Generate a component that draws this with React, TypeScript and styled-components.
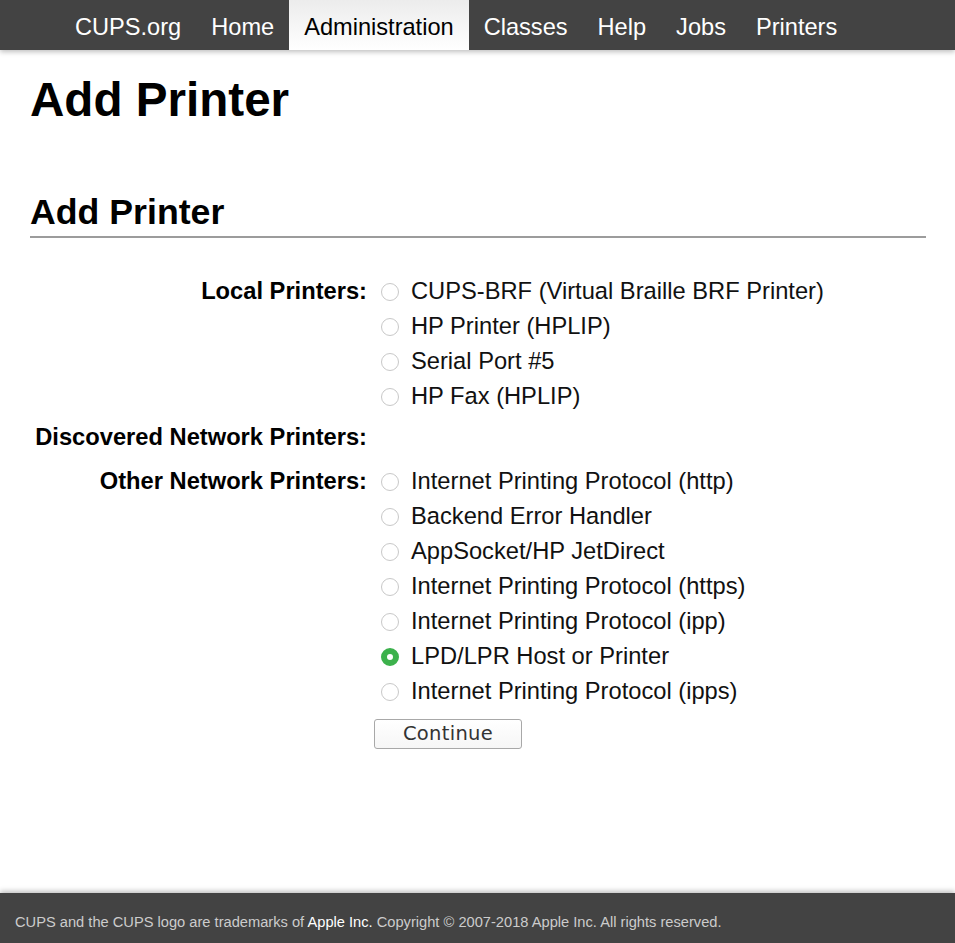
import React from "react";
import styled, { createGlobalStyle } from "styled-components";

const GlobalStyle = createGlobalStyle`
  html, body {
    margin: 0;
    padding: 0;
    background: #fff;
  }
  body {
    font-family: "Liberation Sans", Arial, Helvetica, sans-serif;
    color: #000;
  }
`;

const Page = styled.div`
  display: flex;
  flex-direction: column;
  min-height: 100vh;
`;

const Header = styled.nav`
  position: relative;
  z-index: 2;
  display: flex;
  height: 50px;
  padding-left: 60px;
  background: #434343;
  box-shadow: 0 2px 5px rgba(0, 0, 0, 0.25);
`;

const NavLink = styled.a<{ $active?: boolean }>`
  display: block;
  box-sizing: border-box;
  height: 50px;
  padding: 5px 15px 0;
  font-size: 23.6px;
  line-height: 45px;
  text-decoration: none;
  color: ${(p) => (p.$active ? "#000" : "#fff")};
  background: ${(p) => (p.$active ? "linear-gradient(#ececec, #ffffff)" : "transparent")};
`;

const Main = styled.main`
  flex: 1;
  padding: 0 29px 0 30px;
`;

const Title = styled.h1`
  margin: 26px 0 0;
  font-size: 47.6px;
  line-height: 48px;
  font-weight: bold;
`;

const SectionTitle = styled.h2`
  margin: 69.5px 0 0;
  padding-bottom: 6.5px;
  font-size: 35.7px;
  line-height: 36px;
  font-weight: bold;
  border-bottom: 2px solid #9c9c9c;
`;

const Form = styled.form`
  margin-top: 36px;
`;

const FormRow = styled.div<{ $space?: number }>`
  display: grid;
  grid-template-columns: 337px 1fr;
  column-gap: 7px;
  margin-top: ${(p) => p.$space ?? 0}px;
`;

const RowLabel = styled.div`
  text-align: right;
  font-size: 23.7px;
  line-height: 35px;
  font-weight: bold;
  white-space: nowrap;
`;

const Options = styled.div`
  display: flex;
  flex-direction: column;
`;

const Option = styled.label`
  display: flex;
  align-items: center;
  height: 35px;
  font-size: 23.7px;
  line-height: 35px;
  color: #111;
  white-space: nowrap;
`;

const Radio = styled.span<{ $checked?: boolean }>`
  box-sizing: border-box;
  flex: none;
  width: 18px;
  height: 18px;
  margin: 0 12px 0 7px;
  border-radius: 50%;
  border: ${(p) => (p.$checked ? "6px solid #3cb14c" : "1px solid #c8c8c8")};
  background: #fff;
`;

const Button = styled.button`
  box-sizing: border-box;
  width: 148px;
  height: 30px;
  padding: 0;
  border: 1px solid #a8a8a8;
  border-radius: 3px;
  background: linear-gradient(#ffffff, #f6f6f6);
  font-family: "DejaVu Sans", Verdana, sans-serif;
  font-size: 19.5px;
  line-height: 28px;
  color: #333;
  letter-spacing: 0.3px;
`;

const Footer = styled.footer`
  position: relative;
  z-index: 2;
  box-sizing: border-box;
  height: 50px;
  padding: 9px 15px 0;
  background: #434343;
  box-shadow: 0 -2px 5px rgba(0, 0, 0, 0.25);
  color: #cccccc;
  font-size: 14.66px;
  line-height: 41px;
  white-space: nowrap;
`;

const FooterLink = styled.a`
  color: #fff;
  text-decoration: none;
`;

const navItems = ["CUPS.org", "Home", "Administration", "Classes", "Help", "Jobs", "Printers"];

const localPrinters = [
  "CUPS-BRF (Virtual Braille BRF Printer)",
  "HP Printer (HPLIP)",
  "Serial Port #5",
  "HP Fax (HPLIP)",
];

const otherPrinters = [
  "Internet Printing Protocol (http)",
  "Backend Error Handler",
  "AppSocket/HP JetDirect",
  "Internet Printing Protocol (https)",
  "Internet Printing Protocol (ipp)",
  "LPD/LPR Host or Printer",
  "Internet Printing Protocol (ipps)",
];

export default function App() {
  return (
    <>
      <GlobalStyle />
      <Page>
        <Header>
          {navItems.map((n) => (
            <NavLink key={n} href="#" $active={n === "Administration"}>
              {n}
            </NavLink>
          ))}
        </Header>
        <Main>
          <Title>Add Printer</Title>
          <SectionTitle>Add Printer</SectionTitle>
          <Form onSubmit={(e) => e.preventDefault()}>
            <FormRow>
              <RowLabel>Local Printers:</RowLabel>
              <Options>
                {localPrinters.map((p) => (
                  <Option key={p}>
                    <Radio />
                    {p}
                  </Option>
                ))}
              </Options>
            </FormRow>
            <FormRow $space={6}>
              <RowLabel>Discovered Network Printers:</RowLabel>
              <Options />
            </FormRow>
            <FormRow $space={9}>
              <RowLabel>Other Network Printers:</RowLabel>
              <Options>
                {otherPrinters.map((p) => (
                  <Option key={p}>
                    <Radio $checked={p === "LPD/LPR Host or Printer"} />
                    {p}
                  </Option>
                ))}
              </Options>
            </FormRow>
            <FormRow $space={10}>
              <div />
              <div>
                <Button type="submit">Continue</Button>
              </div>
            </FormRow>
          </Form>
        </Main>
        <Footer>
          CUPS and the CUPS logo are trademarks of <FooterLink href="#">Apple Inc.</FooterLink> Copyright © 2007-2018 Apple Inc. All rights reserved.
        </Footer>
      </Page>
    </>
  );
}
